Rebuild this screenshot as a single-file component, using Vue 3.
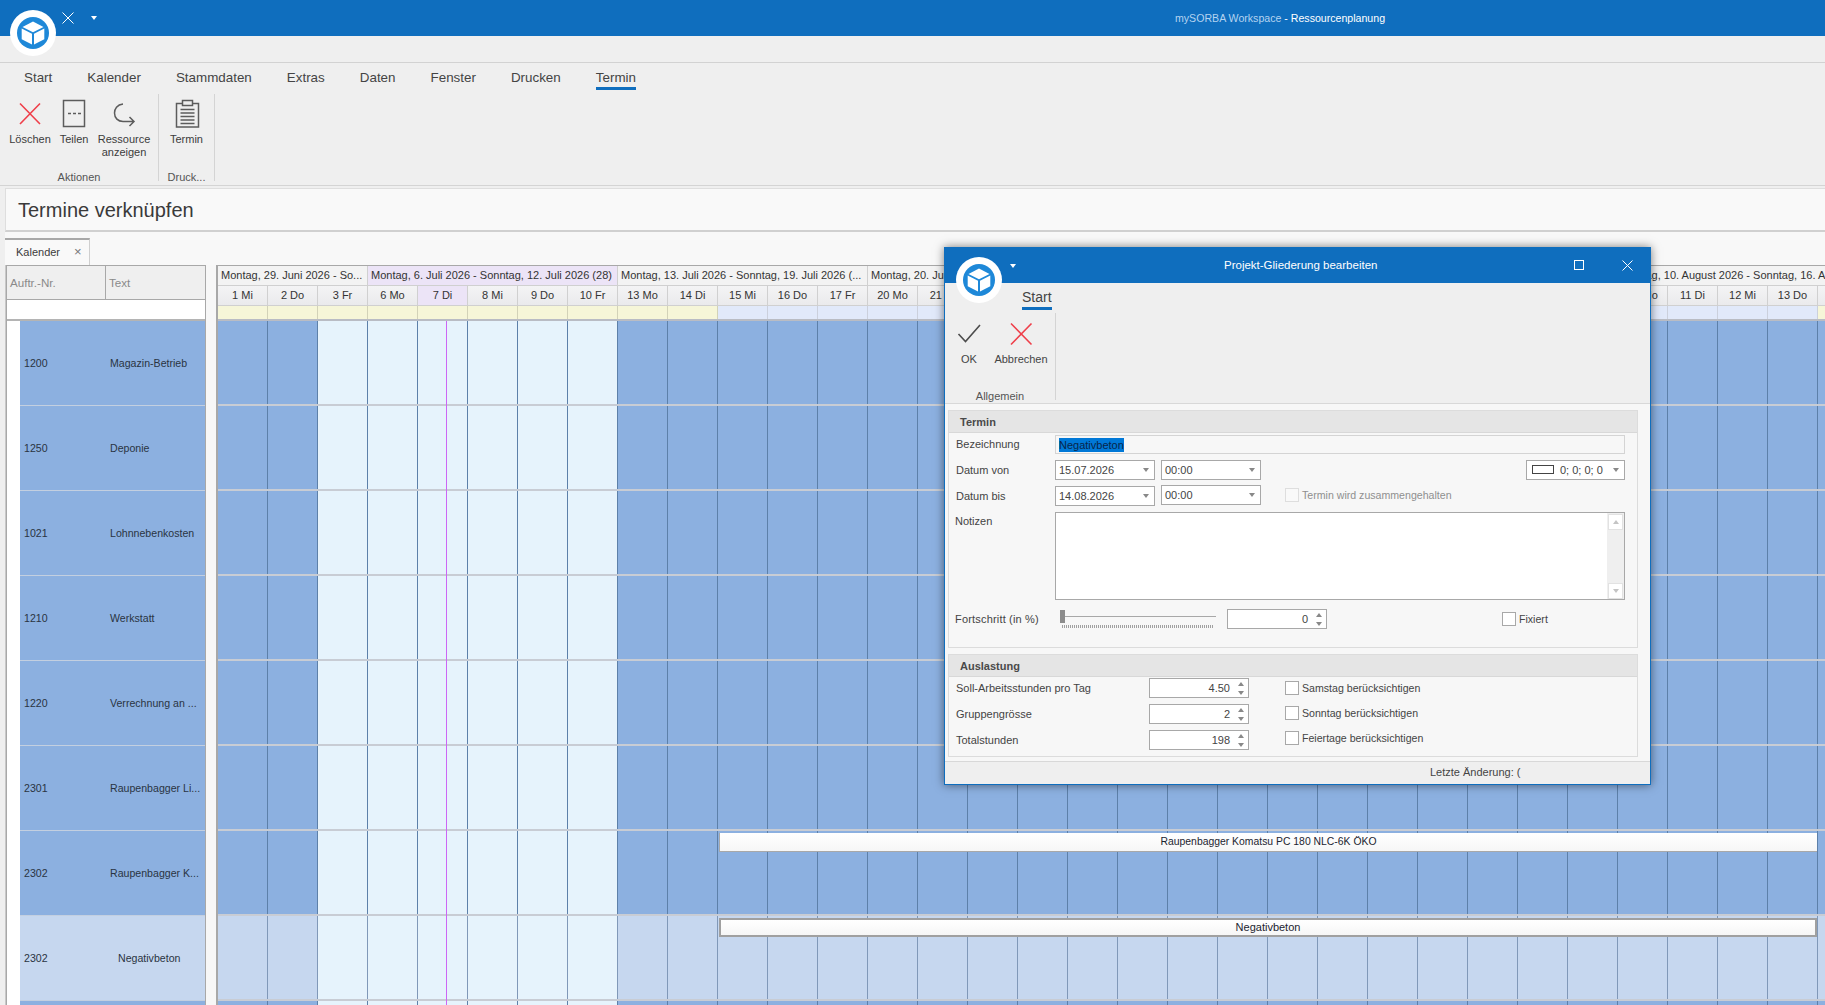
<template>
  <div class="app">
    <!-- main window title -->
    <header class="titlebar">
      <svg class="qa-close" viewBox="0 0 12 12"><path d="M0.5 0.5L11.5 11.5M11.5 0.5L0.5 11.5" /></svg>
      <span class="qa-caret"></span>
      <div class="app-title"><span class="app-name">mySORBA Workspace</span> - Ressourcenplanung</div>
    </header>
    <div class="logo main-logo">
      <svg viewBox="-23 -23 46 46"><use href="#cube-logo" /></svg>
    </div>
    <svg width="0" height="0" class="defs">
      <g id="cube-logo">
        <circle r="23" fill="#fff" />
        <circle r="16" fill="#1e88d8" />
        <path fill="#fff" d="M0 -11.5L10.5 -6L0 -0.8L-10.5 -6Z" />
        <path fill="#fff" d="M-11.3 -4.4L-1 0.8L-1 11.5L-11.3 6.2Z" />
        <path fill="#fff" d="M11.3 -4.4L1 0.8L1 11.5L11.3 6.2Z" />
      </g>
    </svg>
    <div class="top-gap"></div>

    <!-- ribbon -->
    <section class="ribbon">
      <nav class="r-tabs">
        <span v-for="tab in ribbonTabs" :key="tab" class="r-tab" :class="{ active: tab === 'Termin' }">{{ tab }}</span>
      </nav>
      <div class="r-body">
        <div class="r-group aktionen">
          <div class="r-buttons">
            <div class="r-btn loeschen">
              <svg class="r-icon" viewBox="0 0 30 30"><path d="M5 4.5L25 25M25 4.5L5 25" class="red" /></svg>
              <span>Löschen</span>
            </div>
            <div class="r-btn teilen">
              <svg class="r-icon" viewBox="0 0 30 30"><rect x="4.5" y="1.5" width="21" height="26" class="grey" /><path d="M9 14.5H12M14 14.5H17M19 14.5H22" class="grey" /></svg>
              <span>Teilen</span>
            </div>
            <div class="r-btn ressource">
              <svg class="r-icon" viewBox="0 0 30 30"><path d="M14 5C8 5.500 5.500 10 5.500 14C5.500 19 9 22.500 14 22.500H25M20.500 18L25 22.500L20.500 27" class="grey" /></svg>
              <span>Ressource<br />anzeigen</span>
            </div>
          </div>
          <div class="r-label">Aktionen</div>
        </div>
        <div class="r-sep"></div>
        <div class="r-group drucken">
          <div class="r-buttons">
            <div class="r-btn termin">
              <svg class="r-icon" viewBox="0 0 30 30">
                <path d="M10 4.500H4.500V28H26.500V4.500H21" class="grey" />
                <rect x="10.500" y="1.500" width="10" height="5" class="grey" />
                <path d="M8.500 10.500H22.500M8.500 14H22.500M8.500 17.500H22.500M8.500 21H22.500M8.500 24.500H22.500" class="grey" />
              </svg>
              <span>Termin</span>
            </div>
          </div>
          <div class="r-label">Druck...</div>
        </div>
        <div class="r-sep"></div>
      </div>
    </section>

    <div class="page-title">Termine verknüpfen</div>

    <div class="doc-tabs">
      <div class="doc-tab">
        <span>Kalender</span>
        <span class="doc-close">×</span>
      </div>
    </div>

    <!-- scheduler -->
    <main class="sched">
      <div class="list">
        <div class="list-head">
          <div class="lh-num">Auftr.-Nr.</div>
          <div class="lh-text">Text</div>
        </div>
        <div class="list-filter"></div>
        <div v-for="(row, i) in rows" :key="i" class="list-row" :class="{ selected: row.selected, child: row.child }">
          <span class="lr-num">{{ row.num }}</span>
          <span class="lr-text">{{ row.text }}</span>
        </div>
      </div>

      <div class="timeline">
        <div class="weeks">
          <div
            v-for="week in weeks"
            :key="week.label"
            class="week"
            :class="{ today: week.today }"
            :style="{ width: week.span * 50 + 'px' }"
          >{{ week.label }}</div>
        </div>
        <div class="days">
          <div v-for="day in days" :key="day.label" class="day" :class="{ today: day.label === '7 Di' }">{{ day.label }}</div>
        </div>
        <div class="marks">
          <div v-for="(day, i) in days" :key="day.label" class="mark" :class="{ free: i >= 10 && i < 32 }"></div>
        </div>
        <div class="t-body">
          <div v-for="(row, r) in rows" :key="r" class="t-row" :class="{ selected: row.selected }">
            <div v-for="(day, i) in days" :key="day.label" class="t-cell" :class="{ light: i >= 2 && i < 8 }"></div>
            <div v-if="row.bar" class="bar" :class="{ selected: row.selected }">{{ row.bar }}</div>
          </div>
          <div class="now"></div>
        </div>
      </div>
    </main>

    <!-- dialog -->
    <div class="dialog">
      <div class="d-title">
        <span class="d-caret"></span>
        <span class="d-name">Projekt-Gliederung bearbeiten</span>
        <svg class="d-max" viewBox="0 0 10 10"><rect x="0.500" y="0.500" width="9" height="9" /></svg>
        <svg class="d-close" viewBox="0 0 11 11"><path d="M0.500 0.500L10.500 10.500M10.500 0.500L0.500 10.500" /></svg>
      </div>
      <div class="logo d-logo">
        <svg viewBox="-23 -23 46 46"><use href="#cube-logo" /></svg>
      </div>
      <section class="d-ribbon">
        <div class="d-tabs"><span class="d-tab">Start</span></div>
        <div class="d-rbody">
          <div class="d-group">
            <div class="d-buttons">
              <div class="d-btn ok">
                <svg class="d-icon" viewBox="0 0 26 26"><path d="M2.500 13L9.500 20.500L24 4" class="dark" /></svg>
                <span>OK</span>
              </div>
              <div class="d-btn abbrechen">
                <svg class="d-icon" viewBox="0 0 26 26"><path d="M3 2.500L23.500 23.500M23.500 2.500L3 23.500" class="red" /></svg>
                <span>Abbrechen</span>
              </div>
            </div>
            <div class="d-glabel">Allgemein</div>
          </div>
          <div class="d-sep"></div>
        </div>
      </section>

      <div class="d-content">
        <section class="panel termin-panel">
          <h3 class="panel-head">Termin</h3>
          <div class="f-row r-name">
            <label class="f-label">Bezeichnung</label>
            <div class="f-name"><span class="sel">Negativbeton</span></div>
          </div>
          <div class="f-row r-von">
            <label class="f-label">Datum von</label>
            <div class="combo"><span>15.07.2026</span><i class="tri"></i></div>
            <div class="combo time"><span>00:00</span><i class="tri"></i></div>
            <div class="combo color"><b class="swatch"></b><span>0; 0; 0; 0</span><i class="tri"></i></div>
          </div>
          <div class="f-row r-bis">
            <label class="f-label">Datum bis</label>
            <div class="combo"><span>14.08.2026</span><i class="tri"></i></div>
            <div class="combo time up"><span>00:00</span><i class="tri"></i></div>
            <div class="check disabled keep"><b></b><span>Termin wird zusammengehalten</span></div>
          </div>
          <div class="f-row r-notes">
            <label class="f-label top">Notizen</label>
            <div class="notes">
              <div class="scroll">
                <div class="s-btn"><i class="tri-up"></i></div>
                <div class="s-btn"><i class="tri"></i></div>
              </div>
            </div>
          </div>
          <div class="f-row r-prog">
            <label class="f-label">Fortschritt (in %)</label>
            <div class="slider">
              <div class="track"></div>
              <div class="thumb"></div>
              <div class="ticks"></div>
            </div>
            <div class="spin prog"><span>0</span><div class="spin-btns"><i class="tri-up"></i><i class="tri"></i></div></div>
            <div class="check fix"><b></b><span>Fixiert</span></div>
          </div>
        </section>

        <section class="panel aus-panel">
          <h3 class="panel-head">Auslastung</h3>
          <div class="aus-body">
            <div class="aus-fields">
              <div v-for="f in loadFields" :key="f.label" class="aus-field">
                <label class="aus-label">{{ f.label }}</label>
                <div class="spin"><span>{{ f.value }}</span><div class="spin-btns"><i class="tri-up"></i><i class="tri"></i></div></div>
              </div>
            </div>
            <div class="aus-checks">
              <div v-for="c in loadChecks" :key="c" class="check"><b></b><span>{{ c }}</span></div>
            </div>
          </div>
        </section>
      </div>

      <footer class="d-status">Letzte Änderung: (</footer>
    </div>
  </div>
</template>

<script setup>
const ribbonTabs = ['Start', 'Kalender', 'Stammdaten', 'Extras', 'Daten', 'Fenster', 'Drucken', 'Termin']

const weeks = [
  { label: 'Montag, 29. Juni 2026 - So...', span: 3 },
  { label: 'Montag, 6. Juli 2026 - Sonntag, 12. Juli 2026 (28)', span: 5, today: true },
  { label: 'Montag, 13. Juli 2026 - Sonntag, 19. Juli 2026 (...', span: 5 },
  { label: 'Montag, 20. Juli 2026 - Sonntag, 26. Juli 2026 (...', span: 5 },
  { label: 'Montag, 27. Juli 2026 - Sonntag, 2. August 20...', span: 5 },
  { label: 'Montag, 3. August 2026 - Sonntag, 9. August ...', span: 5 },
  { label: 'Montag, 10. August 2026 - Sonntag, 16. August 2026', span: 5 }
]

const dayNames = ['Mo', 'Di', 'Mi', 'Do', 'Fr']
const days = []
// 1 Mi is the first column, weekends are not shown
let offset = 2
let date = 1
for (let i = 0; i < 33; i++) {
  days.push({ label: `${date} ${dayNames[offset]}` })
  date++
  offset++
  if (offset === 5) {
    offset = 0
    date += 2
  }
  if (date > 31) date -= 31
}

const rows = [
  { num: '1200', text: 'Magazin-Betrieb' },
  { num: '1250', text: 'Deponie' },
  { num: '1021', text: 'Lohnnebenkosten' },
  { num: '1210', text: 'Werkstatt' },
  { num: '1220', text: 'Verrechnung an ...' },
  { num: '2301', text: 'Raupenbagger Li...' },
  { num: '2302', text: 'Raupenbagger K...', bar: 'Raupenbagger Komatsu PC 180 NLC-6K ÖKO' },
  { num: '2302', text: 'Negativbeton', bar: 'Negativbeton', selected: true, child: true },
  { num: '', text: '' }
]

const loadFields = [
  { label: 'Soll-Arbeitsstunden pro Tag', value: '4.50' },
  { label: 'Gruppengrösse', value: '2' },
  { label: 'Totalstunden', value: '198' }
]

const loadChecks = ['Samstag berücksichtigen', 'Sonntag berücksichtigen', 'Feiertage berücksichtigen']
</script>

<style>
html, body { margin: 0; overflow: hidden; background: #efefef; }
</style>

<style scoped>
* { box-sizing: border-box; }
.app {
  position: relative;
  width: 1825px;
  height: 1005px;
  overflow: hidden;
  background: #efefef;
  font-family: "Liberation Sans", Arial, sans-serif;
  font-size: 11px;
  color: #3c3c3c;
  display: flex;
  flex-direction: column;
}
.defs { position: absolute; }

/* title bar */
.titlebar {
  height: 36px;
  flex: none;
  background: #0f6ebe;
  display: flex;
  align-items: center;
  color: #fff;
  padding-left: 62px;
}
.qa-close { width: 12px; height: 12px; }
.qa-close path { stroke: #fff; stroke-width: 1; fill: none; }
.qa-caret {
  margin-left: 17px;
  border-left: 3.5px solid transparent;
  border-right: 3.5px solid transparent;
  border-top: 4px solid #fff;
}
.app-title { margin-left: 1078px; font-size: 10.6px; }
.app-name { color: #b4d3f0; }
.logo { position: absolute; width: 46px; height: 46px; }
.logo svg { width: 46px; height: 46px; display: block; }
.main-logo { left: 10px; top: 10px; }
.top-gap { height: 27px; flex: none; border-bottom: 1px solid #d2d2d2; }

/* ribbon */
.ribbon { height: 123px; flex: none; border-bottom: 1px solid #d4d4d4; }
.r-tabs { display: flex; gap: 35px; padding: 6px 0 0 24px; height: 27px; }
.r-tab {
  font-size: 13.4px;
  line-height: 18px;
  height: 21px;
  border-bottom: 3px solid transparent;
  color: #444;
}
.r-tab.active { border-bottom-color: #0f6ebe; }
.r-body { display: flex; padding-top: 4px; height: 95px; }
.r-group { display: flex; flex-direction: column; justify-content: space-between; }
.aktionen { width: 158px; padding-left: 10px; }
.drucken { width: 55px; align-items: center; }
.r-buttons { display: flex; gap: 10px; padding-top: 5px; }
.r-btn { display: flex; flex-direction: column; align-items: center; line-height: 13px; text-align: center; }
.r-icon { width: 30px; height: 30px; margin-bottom: 4px; }
.loeschen { width: 40px; }
.teilen { width: 30px; margin-left: -1px; }
.ressource { width: 50px; }
.termin { width: 40px; }
.r-label { text-align: center; line-height: 13px; margin-bottom: 1px; color: #555; }
.aktionen .r-label { margin-left: -10px; }
.r-sep { width: 1px; height: 87px; background: #d4d4d4; flex: none; }
svg .red, .red { stroke: #ef3f4a; stroke-width: 1.6; fill: none; }
.grey { stroke: #5c5c5c; stroke-width: 1.500; fill: none; }
.dark { stroke: #4c4c4c; stroke-width: 1.600; fill: none; }

.page-title {
  margin: 2px 0 0 5px;
  height: 44px;
  flex: none;
  background: #f9f9f9;
  border: 1px solid #dedede;
  border-right: 0;
  border-bottom: 2px solid #d0d0d0;
  font-size: 20px;
  line-height: 42px;
  padding-left: 12px;
  color: #3a3a3a;
}
.doc-tabs {
  height: 33px;
  flex: none;
  margin-left: 5px;
  background: #f8f8f8;
  padding-top: 6px;
}
.doc-tab {
  width: 85px;
  height: 27px;
  border-top: 2px solid #a8a8a8;
  border-right: 1px solid #cfcfcf;
  display: flex;
  align-items: center;
  padding: 0 0 2px 11px;
  background: #f9f9f9;
}
.doc-close { margin-left: 14px; color: #777; font-size: 13px; }

/* scheduler */
.sched {
  flex: 1;
  min-height: 0;
  margin-left: 5px;
  background: #f7f7f7;
  display: flex;
  border-left: 1px solid #c8c8c8;
  overflow: hidden;
}
.list { width: 200px; flex: none; background: #fff; border-right: 1px solid #a8a8a8; border-left: 1px solid #a8a8a8; }
.list-head {
  height: 35px;
  display: flex;
  border-top: 1px solid #a8a8a8;
  border-bottom: 1px solid #a8a8a8;
  background: #efefef;
  color: #8a8a8a;
  line-height: 33px;
  font-size: 11.6px;
}
.lh-num { width: 99px; padding-left: 3px; border-right: 1px solid #a8a8a8; }
.lh-text { padding-left: 3px; }
.list-filter { height: 21px; border-bottom: 2px solid #b4b4b4; }
.list-row {
  height: 85px;
  margin-left: 13px;
  background: #8cb0e0;
  border-bottom: 1px solid #c3cfe0;
  display: flex;
  align-items: center;
  color: #2a3442;
  font-size: 10.6px;
}
.list-row.selected { background: #c6d7ef; }
.lr-num { width: 90px; padding-left: 4px; flex: none; }
.list-row.child .lr-text { padding-left: 8px; }

.timeline { margin-left: 10px; flex: 1; min-width: 0; border-left: 2px solid #a8a8a8; overflow: hidden; }
.weeks, .days, .marks, .t-row { display: flex; width: 1650px; }
.weeks { height: 21px; border-top: 1px solid #a8a8a8; }
.week {
  flex: none;
  line-height: 19px;
  padding-left: 3px;
  background: #f3f3f3;
  border-right: 1px solid #d0d0d0;
  border-bottom: 1px solid #d0d0d0;
  white-space: nowrap;
  overflow: hidden;
  color: #333;
}
.week.today { background: #ece4f7; }
.days { height: 20px; }
.day {
  width: 50px;
  flex: none;
  text-align: center;
  line-height: 19px;
  background: linear-gradient(#f4f4f5, #eaeaec);
  border-right: 1px solid #d0d0d0;
  border-bottom: 1px solid #d0d0d0;
  color: #333;
}
.day.today { background: #ece4f7; }
.marks { height: 15px; border-bottom: 2px solid #b9bcc4; }
.mark { width: 50px; flex: none; background: #f6f6d8; border-right: 1px solid #d2d2b8; }
.mark.free { background: #e1e9fa; border-right-color: #cbd0dc; }
.t-body { position: relative; }
.t-row { position: relative; height: 85px; border-bottom: 2px solid #c8ccd4; }
.t-cell { width: 50px; flex: none; background: #8cb0e0; border-right: 1px solid #5d80a9; }
.t-cell.light { background: #e6f3fc; }
.t-row.selected .t-cell { background: #c6d7ef; border-right-color: #8098b8; }
.t-row.selected .t-cell.light { background: #e6f3fc; }
.bar {
  position: absolute;
  left: 501px;
  top: 2px;
  width: 1098px;
  height: 19px;
  background: linear-gradient(#fff, #f6f6f6);
  border-bottom: 1px solid #a8a8a8;
  border-left: 1px solid #a8a8a8;
  text-align: center;
  line-height: 18px;
  color: #1c2430;
  font-size: 10.4px;
}
.bar.selected { top: 2px; border: 2px solid #a0a0a0; line-height: 15px; font-size: 11px; }
.now { position: absolute; left: 228px; top: 0; bottom: 0; width: 1px; background: #cc66f5; }

/* dialog */
.dialog {
  position: absolute;
  left: 944px;
  top: 247px;
  width: 707px;
  height: 538px;
  background: #f7f7f7;
  border: 1px solid #0f6ebe;
  border-top: 0;
  box-shadow: 0 0 9px rgba(0, 0, 0, 0.5);
  display: flex;
  flex-direction: column;
  color: #444;
}
.d-title {
  height: 36px;
  flex: none;
  background: #0f6ebe;
  color: #fff;
  display: flex;
  align-items: center;
  position: relative;
  font-size: 11.500px;
}
.d-caret {
  position: absolute;
  left: 65px;
  top: 17px;
  border-left: 3.500px solid transparent;
  border-right: 3.500px solid transparent;
  border-top: 4px solid #fff;
}
.d-name { margin-left: 279px; width: 146px; white-space: nowrap; }
.d-max { width: 10px; height: 10px; margin-left: 204px; }
.d-max rect { fill: none; stroke: #fff; stroke-width: 1; }
.d-close { width: 11px; height: 11px; margin-left: 38px; }
.d-close path { stroke: #fff; stroke-width: 1; fill: none; }
.d-logo { left: 11px; top: 10px; }
.d-ribbon { height: 121px; flex: none; background: #efefef; border-bottom: 1px solid #d8d8d8; }
.d-tabs { padding: 5px 0 0 77px; height: 27px; }
.d-tab {
  display: inline-block;
  font-size: 14px;
  line-height: 18px;
  height: 22px;
  padding-bottom: 1px;
  border-bottom: 3px solid #0f6ebe;
  color: #444;
}
.d-rbody { display: flex; height: 93px; }
.d-group { width: 110px; display: flex; flex-direction: column; justify-content: space-between; }
.d-buttons { display: flex; gap: 6px; padding: 11px 0 0 4px; }
.d-btn { display: flex; flex-direction: column; align-items: center; line-height: 13px; }
.d-icon { width: 26px; height: 26px; margin-bottom: 6px; }
.ok { width: 40px; }
.abbrechen { width: 52px; }
.d-glabel { text-align: center; line-height: 13px; color: #555; }
.d-sep { width: 1px; height: 87px; margin-top: 3px; background: #d4d4d4; }

.d-content { flex: 1; padding: 6px 12px 0 3px; }
.panel { border: 1px solid #dcdcdc; background: #f7f7f7; }
.termin-panel { height: 238px; }
.aus-panel { height: 103px; margin-top: 6px; }
.panel-head {
  margin: 0;
  height: 22px;
  padding-left: 11px;
  background: #e5e5e5;
  border-bottom: 1px solid #d8d8d8;
  font-size: 11px;
  line-height: 22px;
  font-weight: bold;
  color: #4a4a4a;
}
.f-row { display: flex; align-items: center; padding-right: 12px; }
.r-name { height: 19px; margin-top: 2px; }
.r-von { height: 19px; margin-top: 6px; }
.r-bis { height: 19px; margin-top: 7px; }
.r-notes { height: 88px; margin-top: 7px; align-items: flex-start; }
.r-prog { height: 20px; margin-top: 9px; }
.f-label { width: 106px; flex: none; padding-left: 7px; }
.r-name .f-label { margin-top: -2px; }
.f-label.top { padding: 3px 0 0 6px; }
.r-prog .f-label { padding-left: 6px; letter-spacing: 0.18px; }
.f-name {
  flex: 1;
  height: 19px;
  background: #f7f7f7;
  border: 1px solid #d4d4d4;
  padding: 2px 0 0 3px;
  line-height: 14px;
}
.sel { display: inline-block; background: #0078d7; color: #08264a; height: 14px; }
.combo {
  width: 100px;
  height: 20px;
  flex: none;
  background: #fff;
  border: 1px solid #a8a8a8;
  display: flex;
  align-items: center;
  padding: 0 5px 0 3px;
  justify-content: space-between;
}
.combo.time { margin-left: 6px; }
.combo.time.up { position: relative; top: -1px; }
.combo.color { margin-left: auto; width: 99px; padding-left: 5px; justify-content: flex-start; }
.combo.color .tri { margin-left: auto; }
.swatch { width: 22px; height: 9px; border: 1px solid #444; background: #fff; margin-right: 6px; }
.tri, .tri-up {
  display: block;
  width: 0;
  height: 0;
  border-left: 3.500px solid transparent;
  border-right: 3.500px solid transparent;
}
.tri { border-top: 4px solid #888; }
.tri-up { border-bottom: 4px solid #aaa; }
.check { display: flex; align-items: center; gap: 3px; height: 14px; white-space: nowrap; font-size: 10.6px; }
.check b { width: 14px; height: 14px; background: #fff; border: 1px solid #a8a8a8; display: block; flex: none; }
.check.disabled b { border-color: #dedede; background: #f9f9f9; }
.check.disabled { color: #8f8f8f; }
.keep { margin-left: 24px; position: relative; top: -1px; }
.notes {
  flex: 1;
  height: 88px;
  background: #fff;
  border: 1px solid #a8a8a8;
  display: flex;
  justify-content: flex-end;
}
.scroll {
  width: 17px;
  background: #efefef;
  display: flex;
  flex-direction: column;
  justify-content: space-between;
  padding: 1px 1px 0;
}
.s-btn {
  height: 16px;
  background: #fff;
  border: 1px solid #e2e2e2;
  display: flex;
  align-items: center;
  justify-content: center;
}
.s-btn .tri { border-top-color: #c4c4c4; }
.s-btn .tri-up { border-bottom-color: #c4c4c4; }
.slider { position: relative; width: 156px; height: 20px; margin-left: 5px; flex: none; }
.track { position: absolute; left: 0; right: 0; top: 7px; height: 1px; background: #a8a8a8; }
.thumb { position: absolute; left: 0; top: 1px; width: 5px; height: 13px; background: #8c8c8c; }
.ticks {
  position: absolute;
  left: 2px;
  width: 151px;
  top: 16px;
  height: 3px;
  background: repeating-linear-gradient(90deg, #a0a0a0 0 1px, transparent 1px 2px);
}
.spin {
  width: 100px;
  height: 20px;
  flex: none;
  background: #fff;
  border: 1px solid #a8a8a8;
  display: flex;
  align-items: center;
  justify-content: flex-end;
  padding-right: 4px;
}
.spin-btns { display: flex; flex-direction: column; gap: 5px; margin-left: 8px; }
.spin-btns .tri { border-top-color: #888; }
.spin-btns .tri-up { border-bottom-color: #888; }
.spin.prog { margin-left: 11px; }
.fix { margin-left: 175px; }
.aus-body { display: flex; padding-top: 1px; }
.aus-fields { display: flex; flex-direction: column; gap: 6px; }
.aus-field { display: flex; align-items: center; }
.aus-label { width: 200px; padding-left: 7px; }
.aus-checks { margin-left: 36px; display: flex; flex-direction: column; gap: 11px; padding-top: 3px; }
.d-status {
  height: 23px;
  flex: none;
  background: #efefef;
  border-top: 1px solid #d8d8d8;
  padding-left: 485px;
  line-height: 20px;
}
</style>
